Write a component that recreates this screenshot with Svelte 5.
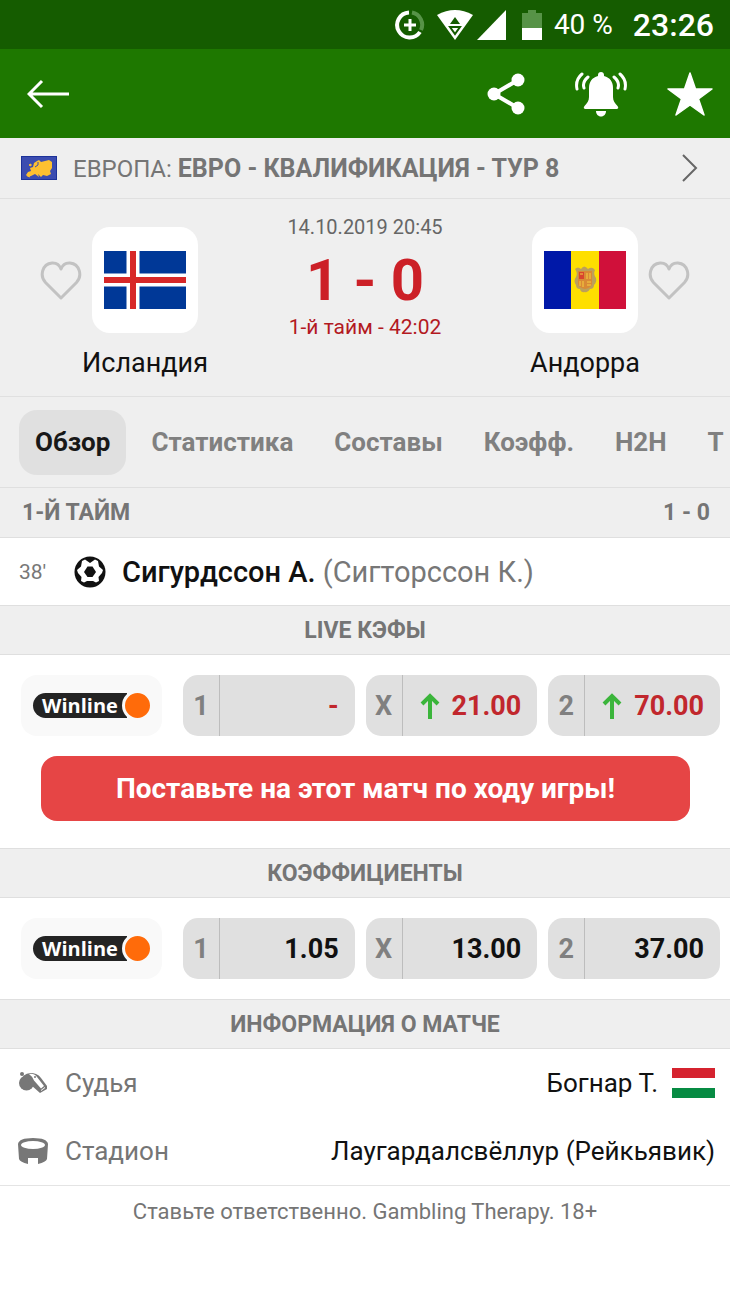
<script lang="ts">
    type Odd = { label: string; value: string; up?: boolean };

    const tabs = ["Обзор", "Статистика", "Составы", "Коэфф.", "H2H", "Т"];
    let active = $state("Обзор");

    const liveOdds: Odd[] = [
        { label: "1", value: "-" },
        { label: "X", value: "21.00", up: true },
        { label: "2", value: "70.00", up: true },
    ];
    const odds: Odd[] = [
        { label: "1", value: "1.05" },
        { label: "X", value: "13.00" },
        { label: "2", value: "37.00" },
    ];
</script>

{#snippet heart(team: string)}
    <button class="icon-button heart" aria-label="В избранное: {team}">
        <svg width="42" height="40" viewBox="0 0 42 40">
            <path
                d="M21 37 5.500 21.500C-.500 15 2 3 12 2c4-.300 7.500 2 9 6 1.500-4 5-6.300 9-6 10 1 12.500 13 6.500 19.500z"
                fill="none"
                stroke="#c2c2c2"
                stroke-width="3"
                stroke-linejoin="round"
            />
        </svg>
    </button>
{/snippet}

{#snippet oddsRow(items: Odd[], live: boolean)}
    <div class="odds">
        <a class="bookmaker" href="#winline" aria-label="Winline">
            <span class="winline">Winline</span>
            <span class="winline-dot"></span>
        </a>
        {#each items as item}
            <button class="odd">
                <span class="odd-label">{item.label}</span>
                <span class="odd-value" class:live>
                    {#if item.up}
                        <svg width="20" height="26" viewBox="0 0 20 26">
                            <path
                                d="M10 26V3M2 11l8-8 8 8"
                                fill="none"
                                stroke="#3bb53b"
                                stroke-width="4"
                            />
                        </svg>
                    {/if}
                    <span>{item.value}</span>
                </span>
            </button>
        {/each}
    </div>
{/snippet}

<div class="screen">
    <div class="status-bar">
        <svg width="30" height="30" viewBox="0 0 30 30" fill="none">
            <path d="M14 2.500A12.500 12.500 0 1 0 25 22" stroke="#fff" stroke-width="4" />
            <path d="M17 2.500A12.500 12.500 0 0 1 26 20" stroke="#579347" stroke-width="4" />
            <path d="M15 9v12M9 15h12" stroke="#fff" stroke-width="3" />
        </svg>
        <svg class="wifi" width="36" height="30" viewBox="0 0 36 30">
            <path d="M0 5Q18-5 36 5L18 30z" fill="#fff" />
            <path d="M18 7l5 7H13z" fill="#155c00" />
            <path d="M13 17h10l-5 7z" fill="#fff" stroke="#155c00" stroke-width="2" />
        </svg>
        <svg class="signal" width="29" height="30" viewBox="0 0 29 30">
            <path d="M29 0v30H0z" fill="#fff" />
        </svg>
        <svg class="battery" width="20" height="30" viewBox="0 0 20 30">
            <path d="M6 0h8v3h6v16H0V3h6z" fill="#579347" />
            <path d="M0 18h20v12H0z" fill="#fff" />
        </svg>
        <span class="charge">40 %</span>
        <span class="clock">23:26</span>
    </div>

    <header class="app-bar">
        <button class="icon-button" aria-label="Назад">
            <svg width="42" height="30" viewBox="0 0 42 30">
                <path
                    d="M42 15H2M15 2 2 15l13 13"
                    fill="none"
                    stroke="#fff"
                    stroke-width="3"
                />
            </svg>
        </button>
        <div class="actions">
            <button class="icon-button share" aria-label="Поделиться">
                <svg width="38" height="42" viewBox="0 0 38 42" fill="#fff">
                    <path
                        d="M31 7 7 21l24 14"
                        fill="none"
                        stroke="#fff"
                        stroke-width="4"
                    />
                    <circle cx="31" cy="7" r="6.500" />
                    <circle cx="7" cy="21" r="6.500" />
                    <circle cx="31" cy="35" r="6.500" />
                </svg>
            </button>
            <button class="icon-button" aria-label="Уведомления">
                <svg width="52" height="46" viewBox="0 0 52 46" fill="#fff">
                    <path
                        d="M26 1c1.800 0 3 1.200 3 3v1c6 1.500 9 6 9 12v9c0 4 2 6 4.500 9 1.500 2 .5 3-1 3h-31c-1.500 0-2.500-1-1-3 2.500-3 4.500-5 4.500-9v-9c0-6 3-10.500 9-12V4c0-1.800 1.200-3 3-3z"
                    />
                    <path d="M21 40h10c0 3-2 5.500-5 5.500S21 43 21 40z" />
                    <path
                        d="M7 3Q0 9 2 18M13 6Q7 11 9 17M45 3q7 6 5 15M39 6q6 5 4 11"
                        fill="none"
                        stroke="#fff"
                        stroke-width="3"
                        stroke-linecap="round"
                    />
                </svg>
            </button>
            <button class="icon-button" aria-label="В избранное">
                <svg width="46" height="44" viewBox="0 0 46 44">
                    <path
                        d="M23 1l5.500 16H45L31.500 27 37 43 23 33 9 43l5.500-16L1 17h16.500z"
                        fill="#fff"
                        stroke="#fff"
                        stroke-width="1.500"
                        stroke-linejoin="round"
                    />
                </svg>
            </button>
        </div>
    </header>

    <a class="league" href="#league">
        <svg width="36" height="24" viewBox="0 0 36 24">
            <path d="M0 0h36v24H0z" fill="#1c3299" />
            <path d="M1 1h34v22H1z" fill="#3b4cb0" />
            <path
                d="M5 19l2-3 3-1-1-3 3-1 1-4 3-2 2-1 2 2 4-1 4-1 3 2v6l-2 3 1 3-4 2-4-1-2 2-3-3 1 3-4-3-4 2-3 1z"
                fill="#fdc030"
            />
            <path d="M8 9l2-1v2zM7 20l2 1" fill="#fdc030" stroke="#fdc030" />
            <path d="M14 11l3-2V6" fill="none" stroke="#3b4cb0" />
        </svg>
        <span class="league-name">ЕВРОПА: <b>ЕВРО - КВАЛИФИКАЦИЯ - ТУР 8</b></span>
        <svg width="16" height="28" viewBox="0 0 16 28">
            <path d="M1 1l13 13L1 27" fill="none" stroke="#666" stroke-width="2" />
        </svg>
    </a>

    <section class="match">
        <div class="team home">
            {@render heart("Исландия")}
            <a class="team-link" href="#iceland">
                <span class="crest">
                    <svg width="82" height="58" viewBox="0 0 82 58">
                        <path d="M0 0h82v58H0z" fill="#003897" />
                        <path d="M29 0v58M0 29h82" stroke="#fff" stroke-width="13" />
                        <path d="M29 0v58M0 29h82" stroke="#d72828" stroke-width="6" />
                    </svg>
                </span>
                <span class="team-name">Исландия</span>
            </a>
        </div>
        <div class="result">
            <span class="date">14.10.2019 20:45</span>
            <strong class="score">1 - 0</strong>
            <span class="stage">1-й тайм - 42:02</span>
        </div>
        <div class="team away">
            <a class="team-link" href="#andorra">
                <span class="crest">
                    <svg width="82" height="58" viewBox="0 0 82 58">
                        <path d="M0 0h27v58H0z" fill="#0018a8" />
                        <path d="M27 0h28v58H27z" fill="#fedf00" />
                        <path d="M55 0h27v58H55z" fill="#d0103a" />
                        <path
                            d="M31 18q3-3 6 0 3-5 7 0 4-3 7 1-2 4 1 8 1 4-2 7 0 4-4 4-2 4-5 3-4 1-5-3-4 0-4-4-3-4 0-8 2-4-1-8z"
                            fill="#bda05a"
                        />
                        <path d="M34 20h14v13q-1 4-7 5-6-1-7-5z" fill="#d98a35" />
                        <path d="M35 21h5v7h-5z" fill="#d8452e" />
                        <path
                            d="M36 23h3M43 22v6M46 22v6M36 30v5M39 30v6M43 31h4M43 34h4"
                            stroke="#f6cf43"
                        />
                    </svg>
                </span>
                <span class="team-name">Андорра</span>
            </a>
            {@render heart("Андорра")}
        </div>
    </section>

    <nav class="tabs">
        {#each tabs as tab}
            <button
                class="tab"
                class:active={tab === active}
                onclick={() => (active = tab)}>{tab}</button
            >
        {/each}
    </nav>

    <h2 class="section-title period">
        <span>1-Й ТАЙМ</span>
        <span>1 - 0</span>
    </h2>
    <div class="event">
        <span class="minute">38'</span>
        <svg width="32" height="32" viewBox="0 0 32 32">
            <circle cx="16" cy="16" r="15.500" fill="#111" />
            <path
                d="M16 7l5-3.500 3 1.500 1 5.500 4 3.500-1 3-3.500 4 .5 4-3 1.500-3-1.500h-6l-3 1.500-3-1.500.5-4L4 17l-1-3 4-3.500L8 5l3-1.500z"
                fill="#fff"
            />
            <path d="M13.500 10.500h5l3.500 5.500-3.500 5h-5L10 16z" fill="#111" />
        </svg>
        <span class="scorer"><b>Сигурдссон А.</b> (Сигторссон К.)</span>
    </div>

    <h2 class="section-title">LIVE КЭФЫ</h2>
    {@render oddsRow(liveOdds, true)}
    <div class="promo">
        <button class="bet">Поставьте на этот матч по ходу игры!</button>
    </div>

    <h2 class="section-title">КОЭФФИЦИЕНТЫ</h2>
    {@render oddsRow(odds, false)}

    <h2 class="section-title">ИНФОРМАЦИЯ О МАТЧЕ</h2>
    <dl class="info">
        <div class="info-row">
            <dt>
                <svg width="30" height="24" viewBox="0 0 30 24" fill="#777">
                    <circle cx="8.500" cy="12" r="7.500" />
                    <circle cx="4" cy="3" r="2" />
                    <path d="M5 5q6-5 13-2 3 1 5 4l6 8v3l-7 4-9-8z" />
                    <path d="M11 3q5-1 8 3l7 9-3 2.500-7-8Q14 5 11 3zM23 19l4-3v1l-4 3z" fill="#fff" />
                    <circle cx="17" cy="6" r="1" />
                </svg>
                Судья
            </dt>
            <dd>
                Богнар Т.
                <svg width="43" height="30" viewBox="0 0 43 30">
                    <path d="M0 0h43v30H0z" fill="#fff" />
                    <path d="M0 0h43v10H0z" fill="#d5232f" />
                    <path d="M0 20h43v10H0z" fill="#078b43" />
                </svg>
            </dd>
        </div>
        <div class="info-row">
            <dt>
                <svg width="30" height="26" viewBox="0 0 30 26">
                    <path
                        d="M0 6q1-6 15-6t15 6l-1 15q-1 3-9 5v-6H10v6q-8-2-9-5z"
                        fill="#777"
                    />
                    <ellipse cx="15" cy="7" rx="12" ry="4" fill="#fff" />
                </svg>
                Стадион
            </dt>
            <dd>Лаугардалсвёллур (Рейкьявик)</dd>
        </div>
    </dl>

    <footer class="disclaimer">Ставьте ответственно. Gambling Therapy. 18+</footer>
</div>

<style>
    :global(body) {
        margin: 0;
        background-color: #fff;
    }

    .screen {
        font-family: Roboto, "Noto Sans", sans-serif;
        color: #111;
        font-size: 26px;
    }

    button {
        border: none;
        padding: 0;
        background: none;
        font: inherit;
        color: inherit;
        cursor: pointer;
    }

    a {
        color: inherit;
        text-decoration: none;
    }

    svg {
        display: block;
        flex: none;
    }

    .status-bar {
        display: flex;
        align-items: center;
        justify-content: flex-end;
        height: 49px;
        padding-right: 16px;
        background-color: #155c00;
        color: #fff;
    }

    .wifi {
        margin-left: 12px;
    }

    .signal {
        margin-left: 4px;
    }

    .battery {
        margin-left: 16px;
    }

    .charge {
        margin-left: 12px;
        font-size: 28px;
    }

    .clock {
        margin-left: 20px;
        font-size: 32px;
        font-weight: 500;
    }

    .app-bar {
        display: flex;
        align-items: center;
        justify-content: space-between;
        height: 89px;
        padding: 0 17px 0 27px;
        background-color: #1e7800;
    }

    .actions {
        display: flex;
        align-items: center;
        gap: 40px;
    }

    .share {
        margin-right: 10px;
    }

    .league {
        display: flex;
        align-items: center;
        height: 60px;
        padding: 0 32px 0 21px;
        background-color: #efefef;
        border-bottom: 1px solid #e0e0e0;
        color: #757575;
        font-size: 24px;
    }

    .league-name {
        flex: 1;
        margin-left: 16px;
    }

    .league-name b {
        font-size: 25px;
    }

    .match {
        display: grid;
        grid-template-columns: 1fr 170px 1fr;
        padding: 12px 40px 16px;
        background-color: #efefef;
    }

    .team {
        display: flex;
        align-items: flex-start;
    }

    .away {
        justify-content: flex-end;
    }

    .heart {
        margin-top: 50px;
    }

    .team-link {
        display: flex;
        flex-direction: column;
        align-items: center;
        width: 126px;
        margin-top: 16px;
    }

    .crest {
        display: grid;
        place-items: center;
        width: 106px;
        height: 106px;
        border-radius: 18px;
        background-color: #fff;
    }

    .team-name {
        margin-top: 13px;
        font-size: 27px;
        line-height: 34px;
    }

    .result {
        display: flex;
        flex-direction: column;
        align-items: center;
        color: #cc2027;
        white-space: nowrap;
    }

    .date {
        margin-top: 4px;
        color: #666;
        font-size: 20px;
        line-height: 24px;
    }

    .score {
        margin-top: 7px;
        font-size: 58px;
        line-height: 68px;
    }

    .stage {
        color: #b3191f;
        font-size: 21px;
        line-height: 26px;
    }

    .tabs {
        display: flex;
        align-items: center;
        gap: 9px;
        height: 91px;
        box-sizing: border-box;
        padding-left: 19px;
        overflow: hidden;
        background-color: #efefef;
        border-top: 1px solid #e0e0e0;
    }

    .tab {
        flex: none;
        height: 65px;
        padding: 0 16px;
        border-radius: 18px;
        color: #808080;
        font-size: 26px;
        font-weight: 700;
    }

    .tab.active {
        background-color: #e0e0e0;
        color: #181818;
    }

    .section-title {
        display: flex;
        align-items: center;
        justify-content: center;
        height: 50px;
        box-sizing: border-box;
        margin: 0;
        border: solid #dfdfdf;
        border-width: 1px 0;
        background-color: #efefef;
        color: #757575;
        font-size: 23px;
        font-weight: 700;
    }

    .section-title.period {
        justify-content: space-between;
        height: 51px;
        padding: 0 20px 0 22px;
    }

    .event {
        display: flex;
        align-items: center;
        height: 67px;
        padding: 0 19px;
        color: #777;
    }

    .minute {
        width: 55px;
        font-size: 21px;
    }

    .scorer {
        margin-left: 16px;
        font-size: 29px;
    }

    .scorer b {
        color: #111;
        font-weight: 500;
    }

    .odds {
        display: grid;
        grid-template-columns: 151px 1fr 1fr 1fr;
        gap: 11px;
        padding: 20px 10px 20px 21px;
    }

    .bookmaker {
        display: flex;
        align-items: center;
        justify-content: center;
        margin-right: 10px;
        border-radius: 16px;
        background-color: #f9f9f9;
    }

    .winline {
        padding: 0 9px;
        border-radius: 13px 0 0 13px;
        background-color: #242424;
        color: #fff;
        font: 700 20px/25px "Open Sans", sans-serif;
    }

    .winline-dot {
        width: 25px;
        height: 25px;
        margin: 0 -3px 0 -5px;
        border: 3px solid #f9f9f9;
        border-radius: 50%;
        background-color: #ff6b0a;
    }

    .odd {
        display: flex;
        height: 61px;
        border-radius: 15px;
        background-color: #e0e0e0;
        font-size: 27px;
        font-weight: 700;
    }

    .odd-label {
        display: grid;
        place-items: center;
        width: 36px;
        height: 100%;
        border-right: 1px solid #bdbdbd;
        color: #808080;
    }

    .odd-value {
        display: flex;
        flex: 1;
        align-items: center;
        justify-content: flex-end;
        gap: 12px;
        height: 100%;
        padding-right: 16px;
    }

    .odd-value.live {
        color: #c1272d;
    }

    .promo {
        padding: 0 40px 27px 41px;
    }

    .bet {
        display: block;
        width: 100%;
        height: 65px;
        border-radius: 16px;
        background-color: #e64545;
        color: #fff;
        font-size: 28px;
        font-weight: 700;
    }

    .info {
        margin: 0;
        border-bottom: 1px solid #e4e4e4;
    }

    .info-row {
        display: flex;
        align-items: center;
        justify-content: space-between;
        height: 68px;
        padding: 0 15px 0 18px;
    }

    dt,
    dd {
        display: flex;
        align-items: center;
        margin: 0;
    }

    dt {
        gap: 17px;
        color: #757575;
    }

    dd {
        gap: 14px;
    }

    .disclaimer {
        padding: 12px 20px 72px;
        color: #757575;
        font-size: 22px;
        line-height: 28px;
        text-align: center;
    }
</style>
